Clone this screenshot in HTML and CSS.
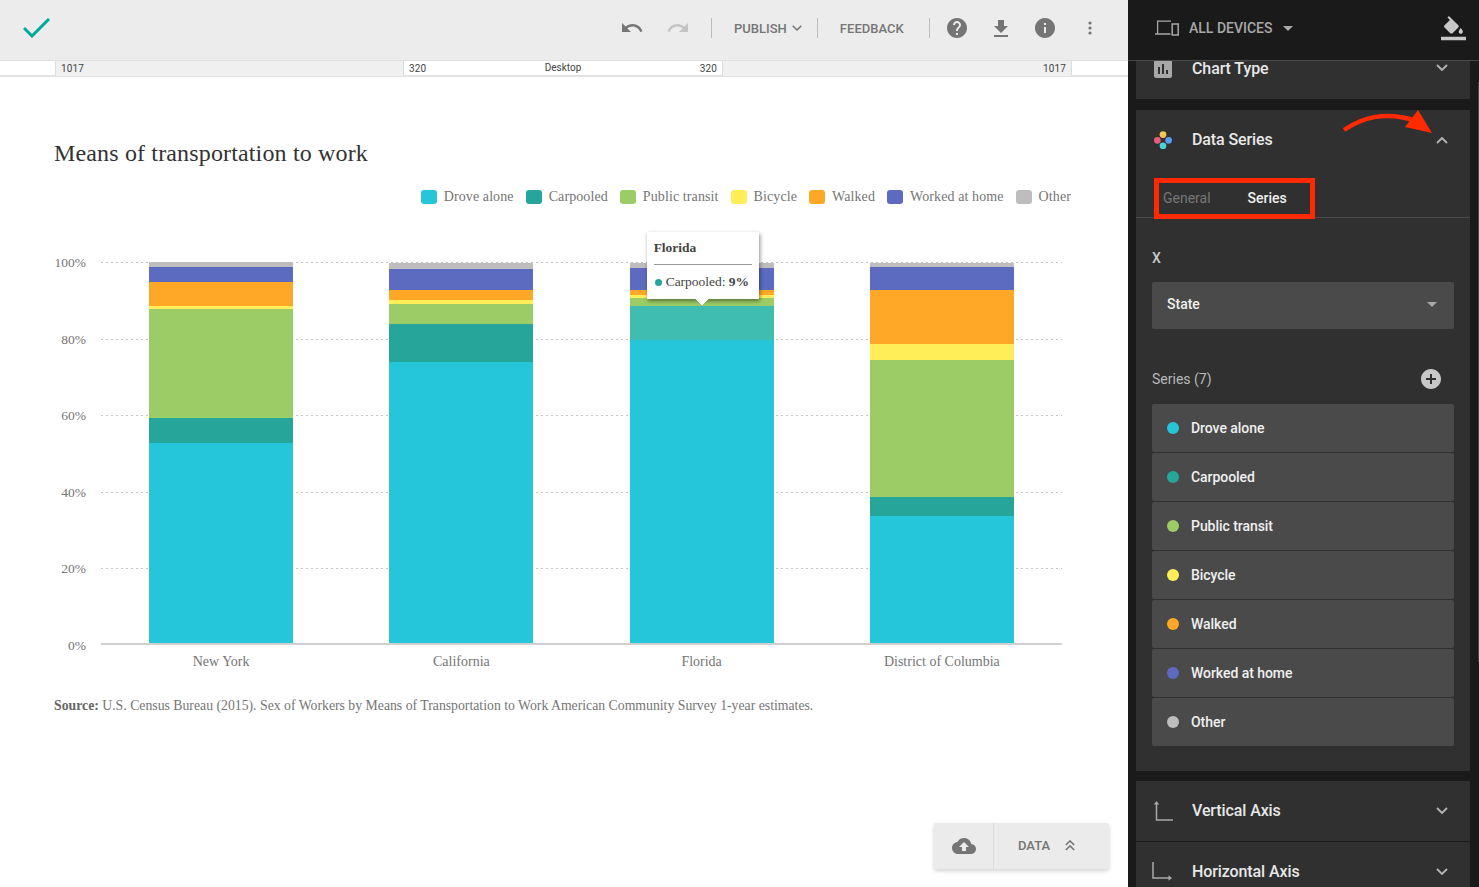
FILE: index.html
```html
<!DOCTYPE html>
<html lang="en">
<head>
<meta charset="utf-8">
<title>Means of transportation to work</title>
<link rel="stylesheet" href="styles.css">
</head>
<body>
<div class="app">
  <main class="main">
    <header class="toolbar">
      <svg class="check" viewBox="0 0 27 20"><path d="M1 10l8 8L26 1" fill="none" stroke="#00a99d" stroke-width="3"/></svg>
      <div class="tools">
        <svg class="ti undo" viewBox="0 0 24 24"><path d="M12.5 8c-2.65 0-5.05.99-6.9 2.6L2 7v9h9l-3.62-3.62c1.39-1.16 3.16-1.88 5.12-1.88 3.54 0 6.55 2.31 7.6 5.5l2.37-.78C21.08 11.03 17.15 8 12.5 8z"/></svg>
        <svg class="ti redo" viewBox="0 0 24 24"><path d="M18.4 10.6C16.55 8.99 14.15 8 11.5 8c-4.65 0-8.58 3.03-9.96 7.22L3.9 16c1.05-3.19 4.05-5.5 7.6-5.5 1.95 0 3.73.72 5.12 1.88L13 16h9V7l-3.6 3.6z"/></svg>
        <span class="divider d1"></span>
        <span class="tool-text publish">PUBLISH</span>
        <svg class="chev-small" viewBox="0 0 10 6"><path d="M.7.7L5 5l4.3-4.3" fill="none" stroke="#757575" stroke-width="1.5"/></svg>
        <span class="divider d2"></span>
        <span class="tool-text feedback">FEEDBACK</span>
        <span class="divider d3"></span>
        <svg class="ti help" viewBox="2 2 20 20"><path d="M12 2C6.48 2 2 6.48 2 12s4.48 10 10 10 10-4.48 10-10S17.52 2 12 2zm1 17h-2v-2h2v2zm2.07-7.75l-.9.92C13.45 12.9 13 13.5 13 15h-2v-.5c0-1.1.45-2.1 1.17-2.83l1.24-1.26c.37-.36.59-.86.59-1.41 0-1.1-.9-2-2-2s-2 .9-2 2H8c0-2.21 1.79-4 4-4s4 1.79 4 4c0 .88-.36 1.68-.93 2.25z"/></svg>
        <svg class="ti download" viewBox="5 3 14 17"><path d="M19 9h-4V3H9v6H5l7 7 7-7zM5 18v2h14v-2H5z"/></svg>
        <svg class="ti info" viewBox="2 2 20 20"><path d="M12 2C6.48 2 2 6.48 2 12s4.48 10 10 10 10-4.48 10-10S17.52 2 12 2zm1 15h-2v-6h2v6zm0-8h-2V7h2v2z"/></svg>
        <svg class="ti dots" viewBox="0 0 4 14"><circle cx="2" cy="2" r="1.6"/><circle cx="2" cy="7" r="1.6"/><circle cx="2" cy="12" r="1.6"/></svg>
      </div>
    </header>
    <div class="ruler">
      <div class="rcell"></div>
      <div class="rcell shade">1017</div>
      <div class="rcell center"><span>320</span><span class="rdesk">Desktop</span><span>320</span></div>
      <div class="rcell shade right">1017</div>
      <div class="rcell edge"></div>
    </div>
    <section class="canvas">
      <h1 class="title">Means of transportation to work</h1>
      <ul class="legend">
        <li><i class="sw c1"></i>Drove alone</li>
        <li><i class="sw c2"></i>Carpooled</li>
        <li><i class="sw c3"></i>Public transit</li>
        <li><i class="sw c4"></i>Bicycle</li>
        <li><i class="sw c5"></i>Walked</li>
        <li><i class="sw c6"></i>Worked at home</li>
        <li><i class="sw c7"></i>Other</li>
      </ul>
      <div class="chart">
        <div class="yaxis"><span>100%</span><span>80%</span><span>60%</span><span>40%</span><span>20%</span><span>0%</span></div>
        <div class="plot">
          <div class="grid"><i></i><i></i><i></i><i></i><i></i></div>
          <div class="bars">
            <div class="bar">
              <b class="c7" style="height:5px"></b><b class="c6" style="height:15px"></b><b class="c5" style="height:24px"></b><b class="c4" style="height:3px"></b><b class="c3" style="height:109px"></b><b class="c2" style="height:25px"></b><b class="c1" style="height:200px"></b>
            </div>
            <div class="bar">
              <b class="c7" style="height:6px"></b><b class="c6" style="height:21px"></b><b class="c5" style="height:10px"></b><b class="c4" style="height:4px"></b><b class="c3" style="height:20px"></b><b class="c2" style="height:38px"></b><b class="c1" style="height:281px"></b>
            </div>
            <div class="bar">
              <b class="c7" style="height:5px"></b><b class="c6" style="height:22px"></b><b class="c5" style="height:5px"></b><b class="c4" style="height:3px"></b><b class="c3" style="height:8px"></b><b class="c2 hot" style="height:34px"></b><b class="c1" style="height:303px"></b>
              <div class="tooltip">
                <div class="tip-title">Florida</div>
                <div class="tip-row"><i class="tip-dot"></i>Carpooled: <strong>9%</strong></div>
              </div>
            </div>
            <div class="bar">
              <b class="c7" style="height:4px"></b><b class="c6" style="height:23px"></b><b class="c5" style="height:54px"></b><b class="c4" style="height:16px"></b><b class="c3" style="height:137px"></b><b class="c2" style="height:19px"></b><b class="c1" style="height:127px"></b>
            </div>
          </div>
        </div>
        <div class="xaxis"><span>New York</span><span>California</span><span>Florida</span><span>District of Columbia</span></div>
      </div>
      <p class="source"><strong>Source:</strong> U.S. Census Bureau (2015). Sex of Workers by Means of Transportation to Work American Community Survey 1-year estimates.</p>
      <div class="data-btn">
        <span class="cloud"><svg viewBox="0 0 24 24"><path d="M19.35 10.04C18.67 6.59 15.64 4 12 4 9.11 4 6.6 5.64 5.35 8.04 2.34 8.36 0 10.91 0 14c0 3.31 2.69 6 6 6h13c2.76 0 5-2.24 5-5 0-2.64-2.05-4.78-4.65-4.96zM14 13v4h-4v-4H7l5-5 5 5h-3z"/></svg></span>
        <span class="data-label">DATA</span>
        <svg class="dbl" viewBox="0 0 10 11"><path d="M.8 5L5 .9 9.200 5M.8 10L5 5.900 9.200 10" fill="none" stroke="#757575" stroke-width="1.500"/></svg>
      </div>
    </section>
  </main>
  <aside class="side">
    <header class="side-head">
      <svg class="devices" viewBox="0 0 24 16"><path d="M16 1.200H2.600V14M0 14h15.500" fill="none" stroke="#a8a8a8" stroke-width="1.300"/><rect x="17.200" y="4" width="6" height="11" fill="none" stroke="#a8a8a8" stroke-width="1.500"/></svg>
      <span class="all">ALL DEVICES</span>
      <i class="caret"></i>
      <svg class="bucket" viewBox="0 0 24 24"><path d="M7.600 0L6.200 1.400l2.400 2.400-5.200 5.100c-.6.600-.6 1.500 0 2.100l5.500 5.500c.3.300.7.400 1.100.400s.8-.1 1.100-.4l5.500-5.500c.6-.6.600-1.500 0-2.100zM19 11.500s-2 2.200-2 3.500c0 1.100.9 2 2 2s2-.9 2-2c0-1.300-2-3.500-2-3.500zM0 20h24v3.200H0z"/></svg>
    </header>
    <div class="scroll">
      <section class="panel first">
        <div class="phead">
          <svg class="pico" viewBox="3 4 18 17"><path d="M19 3H5c-1.100 0-2 .9-2 2v14c0 1.100.9 2 2 2h14c1.100 0 2-.9 2-2V5c0-1.100-.9-2-2-2zM9 17H7v-7h2v7zm4 0h-2V7h2v10zm4 0h-2v-4h2v4z"/></svg>
          <span class="pname">Chart Type</span>
          <svg class="pchev" viewBox="0 0 12 8"><path d="M1 1l5 5 5-5" fill="none" stroke="#b5b5b5" stroke-width="1.800"/></svg>
        </div>
      </section>
      <section class="panel open">
        <div class="phead">
          <svg class="pico" viewBox="0 0 16 16"><circle cx="8" cy="3.200" r="3" fill="#f5c453"/><circle cx="3" cy="8.300" r="3" fill="#ef5a82"/><circle cx="13" cy="8.300" r="3" fill="#5b9cf0"/><circle cx="8" cy="13.200" r="3" fill="#4dd0d6"/></svg>
          <span class="pname">Data Series</span>
          <svg class="pchev" viewBox="0 0 12 8"><path d="M1 7l5-5 5 5" fill="none" stroke="#b5b5b5" stroke-width="1.800"/></svg>
        </div>
        <div class="tabs"><span class="tab">General</span><span class="tab on">Series</span></div>
        <div class="pbody">
          <div class="label-x">X</div>
          <div class="select"><span>State</span><i class="caret small"></i></div>
          <div class="series-head"><span>Series (7)</span><svg class="plus" viewBox="2 2 20 20"><path d="M12 2C6.480 2 2 6.480 2 12s4.480 10 10 10 10-4.480 10-10S17.520 2 12 2zm5 11h-4v4h-2v-4H7v-2h4V7h2v4h4v2z"/></svg></div>
          <ul class="series">
            <li><i class="dot c1"></i>Drove alone</li>
            <li><i class="dot c2"></i>Carpooled</li>
            <li><i class="dot c3"></i>Public transit</li>
            <li><i class="dot c4"></i>Bicycle</li>
            <li><i class="dot c5"></i>Walked</li>
            <li><i class="dot c6"></i>Worked at home</li>
            <li><i class="dot c7"></i>Other</li>
          </ul>
        </div>
      </section>
      <section class="panel joined">
        <div class="phead">
          <svg class="pico axis" viewBox="0 0 20 20"><path d="M3.500 3v16H21" fill="none" stroke="#a8a8a8" stroke-width="1.500"/><path d="M3.500 0L6.200 3.500H.8z" fill="#a8a8a8"/></svg>
          <span class="pname">Vertical Axis</span>
          <svg class="pchev" viewBox="0 0 12 8"><path d="M1 1l5 5 5-5" fill="none" stroke="#b5b5b5" stroke-width="1.800"/></svg>
        </div>
      </section>
      <section class="panel last">
        <div class="phead">
          <svg class="pico axis" viewBox="0 0 20 20"><path d="M1 0v16h16" fill="none" stroke="#a8a8a8" stroke-width="1.500"/><path d="M20 16l-3.500-2.700v5.400z" fill="#a8a8a8"/></svg>
          <span class="pname">Horizontal Axis</span>
          <svg class="pchev" viewBox="0 0 12 8"><path d="M1 1l5 5 5-5" fill="none" stroke="#b5b5b5" stroke-width="1.800"/></svg>
        </div>
      </section>
    </div>
    <div class="thumb"></div>
    <div class="tab-mark"></div>
    <svg class="red-arrow" viewBox="0 0 92 26"><path d="M1 21C20 8 42 2 74 12" fill="none" stroke="#ff2a00" stroke-width="4.500"/><path d="M75 1L89 24 62 18z" fill="#ff2a00"/></svg>
  </aside>
</div>
</body>
</html>
```
FILE: styles.css
```css
* { box-sizing: border-box; }
html, body { margin: 0; height: 100%; overflow: hidden; background: #fff; }
body { font-family: Roboto, "Liberation Sans", sans-serif; }
ul { list-style: none; margin: 0; padding: 0; }
.app { display: flex; width: 1479px; height: 887px; overflow: hidden; }

.c1 { background: #26c6da; }
.c2 { background: #26a69a; }
.c3 { background: #9ccc65; }
.c4 { background: #ffee58; }
.c5 { background: #ffa726; }
.c6 { background: #5c6bc0; }
.c7 { background: #bdbdbd; }

/* main column */
.main { width: 1128px; flex: none; display: flex; flex-direction: column; }
.toolbar { height: 60px; background: #ececec; display: flex; align-items: center; padding: 0 0 4px 23px; flex: none; }
.check { width: 27px; height: 20px; }
.tools { margin-left: 570px; display: flex; align-items: center; height: 100%; }
.ti { fill: #757575; display: block; }
.undo { width: 24px; height: 24px; margin-right: 22px; }
.redo { width: 24px; height: 24px; fill: #c4c4c4; margin-right: 21px; }
.divider { width: 1px; height: 20px; background: #bdbdbd; }
.tool-text { font-size: 13px; font-weight: 500; color: #757575; }
.publish { margin-left: 22px; }
.chev-small { width: 10px; height: 6px; margin-left: 5px; margin-right: 15px; }
.feedback { margin-left: 22px; margin-right: 25px; letter-spacing: .03px; }
.help { width: 20px; height: 20px; margin-left: 17px; }
.download { width: 14px; height: 17px; margin-left: 27px; }
.info { width: 20px; height: 20px; margin-left: 27px; }
.dots { width: 4px; height: 14px; margin-left: 33px; }

.ruler { height: 17px; flex: none; display: grid; grid-template-columns: 55px 348px 319px 350px 56px; border-top: 1px solid #e0e0e0; border-bottom: 2px solid #e2e2e2; font-size: 10px; color: #444; letter-spacing: .15px; line-height: 14px; }
.rcell { padding: 1px 5px 0; }
.shade { background: #f0f0f0; border-left: 1px solid #ddd; }
.center { display: flex; justify-content: space-between; border-left: 1px solid #ddd; }
.rdesk { margin-top: -1px; letter-spacing: 0; }
.right { text-align: right; border-right: 1px solid #ddd; border-left: 1px solid #ddd; }
.edge { padding: 0; }

.canvas { flex: 1; position: relative; padding: 62px 57px 0 54px; font-family: "Liberation Serif", serif; }
.title { margin: 0; font-size: 24px; line-height: 28px; font-weight: 400; color: #333; letter-spacing: .15px; }
.legend { display: flex; justify-content: flex-end; gap: 12px; margin-top: 22px; font-size: 14px; letter-spacing: .1px; line-height: 16px; color: #757575; }
.legend li { display: flex; align-items: center; }
.sw { width: 16px; height: 14px; border-radius: 3px; margin-right: 7px; display: block; }

.chart { display: grid; grid-template-columns: 47px 961px; grid-template-rows: 383px auto; margin-top: 57px; }
.yaxis { display: flex; flex-direction: column; justify-content: space-between; width: 32px; height: 397px; margin-top: -6px; font-size: 13.5px; line-height: 14px; color: #757575; align-items: flex-end; }
.plot { position: relative; border-bottom: 2px solid #d0d0d0; }
.grid { display: flex; flex-direction: column; justify-content: space-between; height: 307px; }
.grid i { display: block; height: 1px; background: linear-gradient(90deg, #c4c4c4 2px, transparent 2px) 0 0 / 5px 1px repeat-x; }
.bars { position: absolute; inset: 0; display: grid; grid-template-columns: repeat(4, 1fr); }
.bar { position: relative; width: 144px; justify-self: center; display: flex; flex-direction: column; justify-content: flex-end; }
.bar b { display: block; }
.bar b.hot { background: #3fbdb0; }
.tooltip { position: absolute; left: 17px; top: -30px; width: 112px; height: 67px; background: #fff; box-shadow: 1px 2px 4px rgba(0,0,0,.45); padding: 0 7px; color: #444; }
.tooltip::after { content: ""; position: absolute; left: 50px; bottom: -5px; width: 10px; height: 10px; background: #fff; transform: rotate(45deg); box-shadow: 2px 2px 2px rgba(0,0,0,.25); clip-path: polygon(100% 0, 100% 100%, 0 100%); }
.tip-title { font-weight: 700; font-size: 13.5px; line-height: 16px; padding: 8px 0 8px; border-bottom: 1px solid #999; }
.tip-row { font-size: 13.5px; line-height: 16px; margin-top: 9px; white-space: nowrap; display: flex; align-items: center; }
.tip-row strong { margin-left: 3px; }
.tip-dot { width: 7px; height: 7px; border-radius: 50%; background: #26a69a; margin: 0 4px 0 1px; }
.xaxis { grid-column: 2; display: grid; grid-template-columns: repeat(4, 1fr); text-align: center; font-size: 14px; line-height: 16px; color: #757575; padding-top: 9px; }
.source { margin: 28px 0 0; font-size: 13.75px; line-height: 16px; color: #757575; white-space: nowrap; }
.source strong { color: #666; }

.data-btn { position: absolute; left: 934px; top: 746px; width: 175px; height: 46px; background: #ebebeb; border-radius: 2px; box-shadow: 0 2px 4px rgba(0,0,0,.18); display: flex; align-items: center; font-family: Roboto, sans-serif; }
.cloud { width: 60px; height: 100%; border-right: 1px solid #dcdcdc; display: flex; align-items: center; justify-content: center; }
.cloud svg { width: 24px; height: 24px; fill: #757575; }
.data-label { margin: -2px 0 0 24px; font-size: 13px; font-weight: 500; color: #757575; }
.dbl { width: 10px; height: 11px; margin-left: 15px; margin-top: -1px; }

/* sidebar */
.side { width: 351px; flex: none; background: #1a1a1a; position: relative; display: flex; flex-direction: column; }
.side-head { height: 61px; flex: none; background: #1a1a1a; border-bottom: 1px solid #4a4a4a; display: flex; align-items: center; padding: 0 0 4px 27px; position: relative; z-index: 1; }
.devices { width: 24px; height: 16px; }
.all { margin-left: 10px; font-size: 14px; font-weight: 500; color: #a8a8a8; }
.caret { width: 0; height: 0; border-left: 5px solid transparent; border-right: 5px solid transparent; border-top: 5px solid #a8a8a8; margin-left: 11px; }
.bucket { width: 25px; height: 25px; fill: #c8c8c8; margin-left: auto; margin-right: 13px; }
.scroll { flex: 1; padding: 0 9px 0 8px; }
.panel { background: #303030; margin-bottom: 11px; }
.panel.open { margin-bottom: 10px; }
.panel.joined { margin-bottom: 1px; }
.phead { height: 60px; display: flex; align-items: center; padding-left: 18px; }
.pico { width: 18px; height: 18px; fill: #a8a8a8; flex: none; }
.pico.axis { width: 20px; height: 20px; }
.joined .axis { margin: 0 -1px; }
.last .axis { margin: 0 0 0 -2px; }
.pname { margin: -1px 0 0 20px; font-size: 16px; font-weight: 500; color: #e8e8e8; letter-spacing: -.1px; }
.pchev { width: 12px; height: 8px; margin-left: auto; margin-right: 22px; }
.first .phead { height: 38px; align-items: flex-start; }
.first .pico { height: 17px; }
.first .pname { margin-top: 1px; line-height: 14px; }
.first .pchev { margin-top: 3px; }
.tabs { height: 49px; margin-top: -1px; border-bottom: 1px solid #4a4a4a; display: flex; align-items: center; font-size: 14px; padding: 9px 0 0 27px; }
.tab { color: #777; }
.tab.on { margin-left: 37px; color: #f0f0f0; font-weight: 500; }
.pbody { padding: 30px 16px 25px; }
.label-x { font-size: 14px; font-weight: 500; color: #c8c8c8; line-height: 20px; }
.select { margin-top: 14px; height: 47px; background: #4a4a4a; border-radius: 2px; display: flex; align-items: center; justify-content: space-between; padding: 0 17px 3px 15px; font-size: 14px; font-weight: 500; color: #f0f0f0; }
.caret.small { margin: 0; }
.series-head { margin-top: 40px; height: 20px; display: flex; align-items: center; justify-content: space-between; padding-right: 13px; font-size: 14px; color: #b8b8b8; }
.plus { width: 20px; height: 20px; fill: #c8c8c8; }
.series { margin-top: 15px; display: flex; flex-direction: column; gap: 1px; }
.series li { height: 48px; background: #4a4a4a; border-radius: 2px; display: flex; align-items: center; padding-left: 15px; font-size: 14px; font-weight: 500; color: #f0f0f0; letter-spacing: -.05px; }
.dot { width: 12px; height: 12px; border-radius: 50%; margin-right: 12px; flex: none; }
.thumb { position: absolute; left: 350px; top: 82px; width: 1px; height: 580px; background: #444; }
.tab-mark { position: absolute; left: 26px; top: 178px; width: 161px; height: 41px; border: 5px solid #ff2a00; }
.red-arrow { position: absolute; left: 215px; top: 109px; width: 92px; height: 26px; }
```
